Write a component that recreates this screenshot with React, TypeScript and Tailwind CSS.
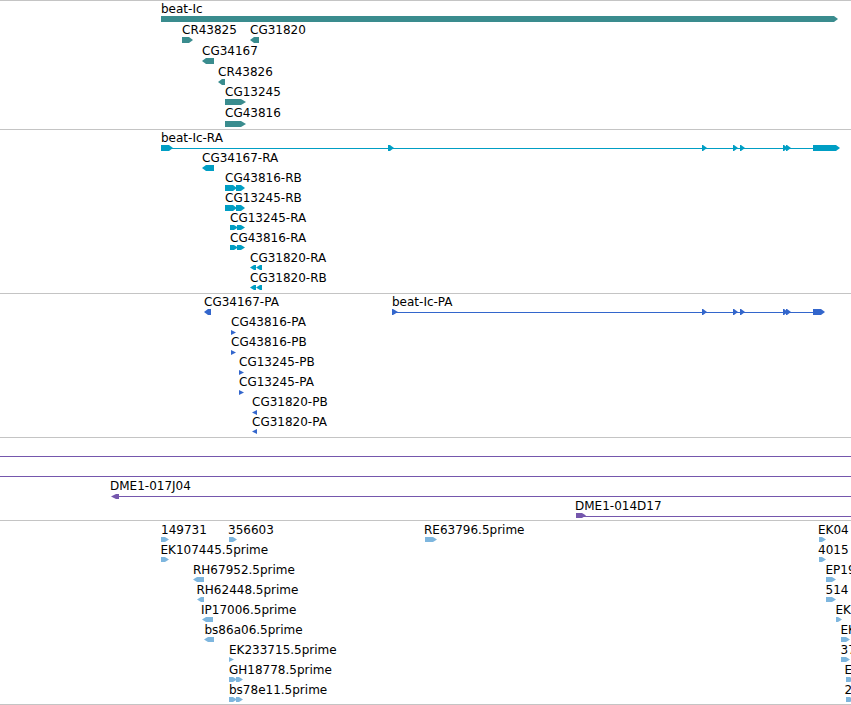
import React from 'react';

type Dir = 'r' | 'l';

type Block = { x: number; y: number; w: number; h: number; dir: Dir; head?: number };
type Line = { x1: number; x2: number; y: number };
type Label = { text: string; x: number; cap: number };

type TrackData = {
  top: number;
  height: number;
  hClass: string;
  color: string;
  labels: Label[];
  blocks: Block[];
  lines: Line[];
};

// outline of a feature box with a pointed end showing strand
const arrowPoints = ({ x, y, w, h, dir, head = 4 }: Block) => {
  const hd = Math.min(head, w);
  const mid = y + h / 2;
  if (dir === 'r') {
    return `${x},${y} ${x + w - hd},${y} ${x + w},${mid} ${x + w - hd},${y + h} ${x},${y + h}`;
  }
  return `${x + w},${y} ${x + hd},${y} ${x},${mid} ${x + hd},${y + h} ${x + w},${y + h}`;
};

const markers = (y: number, h: number): Block[] =>
  [702, 733, 740, 783, 786].map(x => ({ x, y, w: 5, h, dir: 'r' as Dir, head: 4 }));

const doubleRight = (x: number, y: number, h: number, first: number, second: number): Block[] => [
  { x, y, w: first, h, dir: 'r', head: 4 },
  { x: x + first - 1, y, w: second, h, dir: 'r', head: 4 },
];

const doubleLeft = (x: number, y: number, h: number): Block[] => [
  { x, y, w: 6, h, dir: 'l', head: 4 },
  { x: x + 6, y, w: 6, h, dir: 'l', head: 4 },
];

const tracks: TrackData[] = [
  {
    top: 1,
    height: 128,
    hClass: 'h-[129px]',
    color: '#3a8c8e',
    labels: [
      { text: 'beat-Ic', x: 161, cap: 4 },
      { text: 'CR43825', x: 182, cap: 25 },
      { text: 'CG31820', x: 250, cap: 25 },
      { text: 'CG34167', x: 202, cap: 46 },
      { text: 'CR43826', x: 218, cap: 67 },
      { text: 'CG13245', x: 225, cap: 87 },
      { text: 'CG43816', x: 225, cap: 108 },
    ],
    blocks: [
      { x: 161, y: 16, w: 677, h: 6, dir: 'r', head: 4 },
      { x: 182, y: 37, w: 11, h: 6, dir: 'r', head: 4 },
      { x: 250, y: 37, w: 9, h: 6, dir: 'l', head: 4 },
      { x: 202, y: 58, w: 12, h: 6, dir: 'l', head: 4 },
      { x: 218, y: 79, w: 7, h: 6, dir: 'l', head: 4 },
      { x: 225, y: 99, w: 21, h: 6, dir: 'r', head: 5 },
      { x: 225, y: 121, w: 21, h: 6, dir: 'r', head: 5 },
    ],
    lines: [],
  },
  {
    top: 130,
    height: 163,
    hClass: 'h-[164px]',
    color: '#009ec4',
    labels: [
      { text: 'beat-Ic-RA', x: 161, cap: 133 },
      { text: 'CG34167-RA', x: 202, cap: 153 },
      { text: 'CG43816-RB', x: 225, cap: 173 },
      { text: 'CG13245-RB', x: 225, cap: 193 },
      { text: 'CG13245-RA', x: 230, cap: 213 },
      { text: 'CG43816-RA', x: 230, cap: 233 },
      { text: 'CG31820-RA', x: 250, cap: 253 },
      { text: 'CG31820-RB', x: 250, cap: 273 },
    ],
    blocks: [
      { x: 161, y: 145, w: 12, h: 6, dir: 'r', head: 4 },
      { x: 388, y: 145, w: 6, h: 6, dir: 'r', head: 4 },
      ...markers(145, 6),
      { x: 813, y: 145, w: 27, h: 6, dir: 'r', head: 4 },
      { x: 202, y: 165, w: 12, h: 6, dir: 'l', head: 4 },
      ...doubleRight(225, 185, 6, 12, 9),
      ...doubleRight(225, 205, 6, 12, 9),
      ...doubleRight(230, 225, 5, 8, 8),
      ...doubleRight(230, 245, 5, 8, 8),
      ...doubleLeft(250, 265, 5),
      ...doubleLeft(250, 285, 5),
    ],
    lines: [{ x1: 161, x2: 836, y: 148 }],
  },
  {
    top: 294,
    height: 143,
    hClass: 'h-[144px]',
    color: '#3366cc',
    labels: [
      { text: 'CG34167-PA', x: 204, cap: 297 },
      { text: 'beat-Ic-PA', x: 392, cap: 297 },
      { text: 'CG43816-PA', x: 231, cap: 317 },
      { text: 'CG43816-PB', x: 231, cap: 337 },
      { text: 'CG13245-PB', x: 239, cap: 357 },
      { text: 'CG13245-PA', x: 239, cap: 377 },
      { text: 'CG31820-PB', x: 252, cap: 397 },
      { text: 'CG31820-PA', x: 252, cap: 417 },
    ],
    blocks: [
      { x: 204, y: 309, w: 7, h: 6, dir: 'l', head: 4 },
      { x: 392, y: 309, w: 6, h: 6, dir: 'r', head: 5 },
      ...markers(309, 6),
      { x: 813, y: 309, w: 12, h: 6, dir: 'r', head: 4 },
      { x: 231, y: 330, w: 5, h: 5, dir: 'r', head: 5 },
      { x: 231, y: 350, w: 5, h: 5, dir: 'r', head: 5 },
      { x: 239, y: 370, w: 5, h: 5, dir: 'r', head: 5 },
      { x: 239, y: 390, w: 5, h: 5, dir: 'r', head: 5 },
      { x: 252, y: 410, w: 5, h: 5, dir: 'l', head: 5 },
      { x: 252, y: 429, w: 5, h: 5, dir: 'l', head: 5 },
    ],
    lines: [{ x1: 392, x2: 822, y: 312 }],
  },
  {
    top: 438,
    height: 82,
    hClass: 'h-[83px]',
    color: '#7557ad',
    labels: [
      { text: 'DME1-017J04', x: 110, cap: 481 },
      { text: 'DME1-014D17', x: 575, cap: 501 },
    ],
    blocks: [
      { x: 111, y: 494, w: 8, h: 5, dir: 'l', head: 5 },
      { x: 576, y: 513, w: 10, h: 5, dir: 'r', head: 4 },
    ],
    lines: [
      { x1: 0, x2: 851, y: 456 },
      { x1: 0, x2: 851, y: 476 },
      { x1: 115, x2: 851, y: 496 },
      { x1: 580, x2: 851, y: 516 },
    ],
  },
  {
    top: 521,
    height: 183,
    hClass: 'h-[184px]',
    color: '#7eb6de',
    labels: [
      { text: '149731', x: 161, cap: 525 },
      { text: '356603', x: 228, cap: 525 },
      { text: 'RE63796.5prime', x: 424, cap: 525 },
      { text: 'EK04', x: 818, cap: 525 },
      { text: 'EK107445.5prime', x: 160.5, cap: 545 },
      { text: '4015', x: 818, cap: 545 },
      { text: 'RH67952.5prime', x: 193, cap: 565 },
      { text: 'EP19', x: 825.5, cap: 565 },
      { text: '514', x: 825.5, cap: 585 },
      { text: 'RH62448.5prime', x: 196.5, cap: 585 },
      { text: 'IP17006.5prime', x: 201, cap: 605 },
      { text: 'EK', x: 835.5, cap: 605 },
      { text: 'bs86a06.5prime', x: 204.5, cap: 625 },
      { text: 'EK', x: 840.5, cap: 625 },
      { text: 'EK233715.5prime', x: 229, cap: 645 },
      { text: '37', x: 840.5, cap: 645 },
      { text: 'GH18778.5prime', x: 229, cap: 665 },
      { text: 'E', x: 844.5, cap: 665 },
      { text: 'bs78e11.5prime', x: 229, cap: 685 },
      { text: '2', x: 844.5, cap: 685 },
    ],
    blocks: [
      { x: 161, y: 537, w: 8, h: 5, dir: 'r', head: 4 },
      { x: 229, y: 537, w: 8, h: 5, dir: 'r', head: 4 },
      { x: 425, y: 537, w: 12, h: 5, dir: 'r', head: 4 },
      { x: 819, y: 537, w: 7, h: 5, dir: 'r', head: 4 },
      { x: 161, y: 557, w: 8, h: 5, dir: 'r', head: 4 },
      { x: 819, y: 557, w: 7, h: 5, dir: 'r', head: 4 },
      { x: 193, y: 577, w: 11, h: 5, dir: 'l', head: 4 },
      { x: 826, y: 577, w: 10, h: 5, dir: 'r', head: 4 },
      { x: 197, y: 597, w: 7, h: 5, dir: 'l', head: 4 },
      { x: 826, y: 597, w: 10, h: 5, dir: 'r', head: 4 },
      { x: 202, y: 617, w: 11, h: 5, dir: 'l', head: 4 },
      { x: 836, y: 617, w: 6, h: 5, dir: 'r', head: 4 },
      { x: 204, y: 637, w: 10, h: 5, dir: 'l', head: 4 },
      { x: 841, y: 637, w: 9, h: 5, dir: 'r', head: 4 },
      { x: 229, y: 657, w: 5, h: 5, dir: 'r', head: 5 },
      { x: 841, y: 657, w: 9, h: 5, dir: 'r', head: 4 },
      ...doubleRight(229, 677, 5, 8, 7),
      { x: 846, y: 677, w: 8, h: 5, dir: 'r', head: 4 },
      ...doubleRight(229, 697, 5, 8, 7),
      { x: 846, y: 697, w: 8, h: 5, dir: 'r', head: 4 },
    ],
    lines: [],
  },
];

const Track = ({ track }: { track: TrackData }) => (
  <div className={`relative overflow-hidden border-b border-[#c4c4c4] ${track.hClass}`}>
    <svg
      className="absolute left-0 top-0"
      width={851}
      height={track.height}
      viewBox={`0 ${track.top} 851 ${track.height}`}
    >
      <g fill={track.color}>
        {track.lines.map((l, i) => (
          <rect key={`l${i}`} x={l.x1} y={l.y} width={l.x2 - l.x1} height={1} />
        ))}
        {track.blocks.map((b, i) => (
          <polygon key={`b${i}`} points={arrowPoints(b)} />
        ))}
      </g>
    </svg>
    {track.labels.map(lb => (
      <span
        key={`${lb.text}-${lb.x}-${lb.cap}`}
        className="absolute whitespace-nowrap text-[12px] leading-[14px] text-black"
        style={{ left: lb.x, top: lb.cap - 2 - track.top }}
      >
        {lb.text}
      </span>
    ))}
  </div>
);

export default function App() {
  return (
    <div
      className="w-[851px] h-[705px] overflow-hidden bg-white border-t border-[#c4c4c4]"
      style={{ fontFamily: '"DejaVu Sans", Verdana, sans-serif' }}
    >
      {tracks.map((t, i) => (
        <Track key={i} track={t} />
      ))}
    </div>
  );
}
